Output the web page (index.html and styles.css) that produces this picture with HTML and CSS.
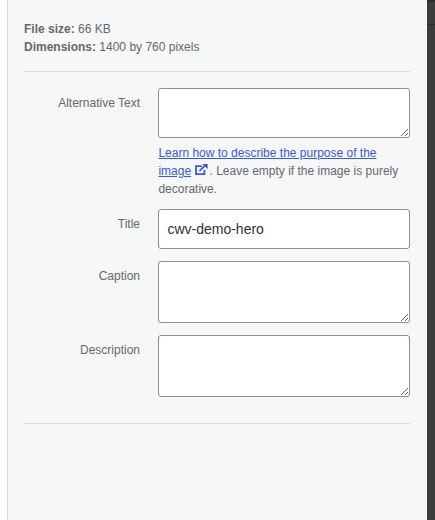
FILE: index.html
```html
<!DOCTYPE html>
<html lang="en">
<head>
<meta charset="utf-8">
<title>Attachment details</title>
<link rel="stylesheet" href="styles.css">
</head>
<body>
<div class="shell">
  <div class="gutter"></div>
  <main class="panel">
    <div class="info">
      <div><strong>File size:</strong> 66 KB</div>
      <div><strong>Dimensions:</strong> 1400 by 760 pixels</div>
    </div>
    <form class="settings">
      <div class="row">
        <label class="label" for="alt">Alternative Text</label>
        <div class="field">
          <textarea id="alt" class="box box-alt"></textarea>
          <p class="help"><a href="#">Learn how to describe the purpose of the image<svg class="ext" viewBox="0 0 13 11" width="13" height="11" aria-hidden="true"><path d="M6.8 2.2H1v8h8.4V6" fill="none" stroke="currentColor" stroke-width="1.8"/><path d="M4.4 6.8 10 1.6" fill="none" stroke="currentColor" stroke-width="1.8"/><path d="M7.4 0h5.2v5z" fill="currentColor"/></svg></a>. Leave empty if the image is purely decorative.</p>
        </div>
      </div>
      <div class="row">
        <label class="label" for="title">Title</label>
        <div class="field"><input id="title" class="box box-input" type="text" value="cwv-demo-hero"></div>
      </div>
      <div class="row">
        <label class="label" for="caption">Caption</label>
        <div class="field"><textarea id="caption" class="box box-tall"></textarea></div>
      </div>
      <div class="row">
        <label class="label" for="desc">Description</label>
        <div class="field"><textarea id="desc" class="box box-tall"></textarea></div>
      </div>
    </form>
  </main>
  <div class="rail"><div class="rail-top"></div></div>
</div>
</body>
</html>
```

FILE: styles.css
```css
* { box-sizing: border-box; }
html, body { margin: 0; height: 100%; }
body {
  font-family: "Liberation Sans", Arial, sans-serif;
  font-size: 12px;
  line-height: 18px;
  color: #646970;
  background: #fff;
  overflow: hidden;
}
.shell { display: flex; height: 520px; }
.gutter { width: 7px; flex: none; background: #fff; }
.panel {
  width: 420px;
  flex: none;
  background: #f6f7f7;
  border-left: 1px solid #dcdcde;
  padding: 20px 17px 0 16px;
}
.rail { flex: 1; background: #3c3c3c; }
.rail-top { height: 25px; border-top: 2px solid #2c2c2c; border-bottom: 1px solid #2c2c2c; }
.info { padding-bottom: 15px; border-bottom: 1px solid #dcdcde; }
.settings { padding: 16px 0 26px; border-bottom: 1px solid #dcdcde; display: flex; flex-direction: column; gap: 12px; }
.row { display: flex; align-items: flex-start; }
.label { width: 116px; flex: none; text-align: right; padding-top: 6px; }
.field { margin-left: 18.4px; width: 252px; flex: none; }
.box {
  display: block;
  width: 100%;
  margin: 0;
  border: 1px solid #8c8f94;
  border-radius: 3px;
  background: #fff;
  color: #2c3338;
  font-family: inherit;
  font-size: 14px;
  line-height: 20px;
  padding: 0 8px;
}
.box-alt { height: 50px; }
.box-input { height: 40px; }
.box-tall { height: 62px; }
.help { margin: 6px 0 -1px; }
.help a { color: #3858e9; }
.ext { margin-left: 3.6px; margin-right: 1.8px; }
```
